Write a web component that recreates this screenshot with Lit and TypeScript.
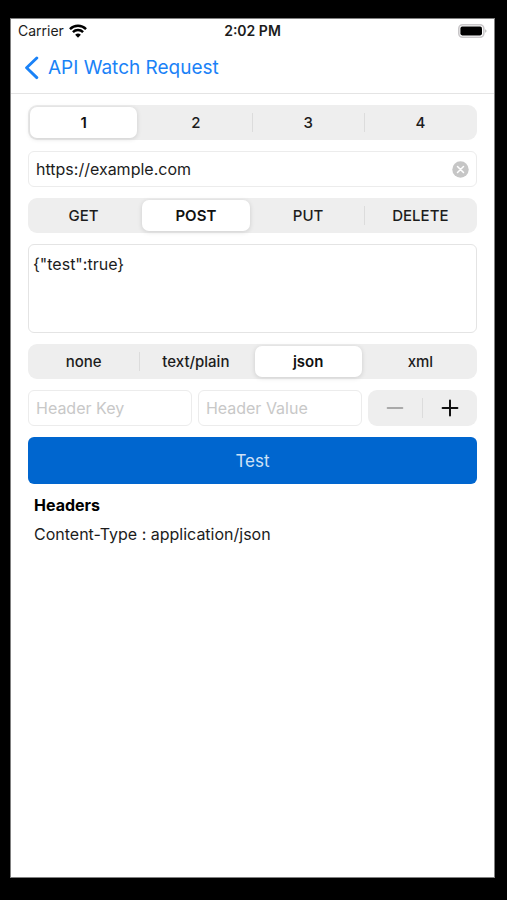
import { LitElement, html, css } from "lit";
import { customElement, property, state } from "lit/decorators.js";

/** A row of mutually exclusive choices. */
@customElement("segmented-control")
export class SegmentedControl extends LitElement {
  @property() name = "";
  @property() label = "";
  @property({ type: Array }) options: string[] = [];
  @property() value = "";

  static styles = css`
    :host {
      display: block;
    }
    .group {
      display: grid;
      grid-auto-flow: column;
      grid-auto-columns: minmax(0, 1fr);
      height: 35px;
      margin: 0;
      padding: 0;
      border: 0;
      border-radius: 9px;
      background: #eeeeee;
    }
    .segment {
      position: relative;
      display: flex;
      padding: 2px 3px 2px 2px;
      font-size: 15px;
      font-weight: 500;
      line-height: 20px;
      color: #1c1c1c;
      cursor: pointer;
    }
    .segment + .segment::before {
      content: "";
      position: absolute;
      left: -1px;
      top: 8px;
      bottom: 8px;
      width: 1px;
      background: #dcdcdc;
    }
    .segment.chosen::before,
    .segment.chosen + .segment::before {
      display: none;
    }
    .radio {
      position: absolute;
      inset: 0;
      margin: 0;
      opacity: 0;
      cursor: pointer;
    }
    .face {
      flex: 1;
      display: flex;
      align-items: center;
      justify-content: center;
      border-radius: 7px;
    }
    .chosen .face {
      background: #ffffff;
      color: #111111;
      font-weight: 600;
      box-shadow: 0 1px 5px rgba(0, 0, 0, 0.14);
    }
    .radio:focus-visible + .face {
      outline: 2px solid #007aff;
    }
  `;

  render() {
    return html`
      <fieldset class="group" aria-label=${this.label}>
        ${this.options.map(
          (option) => html`
            <label class="segment ${option === this.value ? "chosen" : ""}">
              <input
                class="radio"
                type="radio"
                name=${this.name}
                .value=${option}
                .checked=${option === this.value}
                @change=${() => (this.value = option)}
              />
              <span class="face">${option}</span>
            </label>
          `,
        )}
      </fieldset>
    `;
  }
}

@customElement("app-root")
export class AppRoot extends LitElement {
  @state() private url = "https://example.com";

  static styles = css`
    :host {
      display: flex;
      box-sizing: border-box;
      min-height: 100vh;
      padding: 18px 12px 22px 10px;
      background: #000000;
      font-family: Inter, "Liberation Sans", sans-serif;
      color: #1c1c1c;
    }
    * {
      box-sizing: border-box;
    }
    .screen {
      flex: 1;
      min-width: 0;
      border: 1px solid #808080;
      background: #ffffff;
    }
    .status {
      display: grid;
      grid-template-columns: 1fr auto 1fr;
      align-items: center;
      height: 24px;
      padding: 0 7px;
      font-size: 14px;
      line-height: 20px;
    }
    .carrier {
      display: flex;
      align-items: center;
      gap: 5px;
    }
    .time {
      font-weight: 600;
    }
    .battery {
      justify-self: end;
    }
    svg {
      display: block;
    }
    .nav {
      display: flex;
      align-items: center;
      height: 51px;
      padding: 0 13px;
      border-bottom: 1px solid #e4e4e4;
    }
    .back {
      display: flex;
      align-items: center;
      gap: 8px;
      color: #1a82f7;
      font-size: 19px;
      line-height: 24px;
      text-decoration: none;
    }
    .form {
      display: flex;
      flex-direction: column;
      gap: 11px;
      padding: 11px 17px 0;
    }
    input,
    textarea,
    button {
      font: inherit;
      color: inherit;
    }
    .field {
      display: flex;
      align-items: center;
      height: 36px;
      border: 1px solid #ececec;
      border-radius: 6px;
    }
    .input {
      flex: 1;
      min-width: 0;
      height: 100%;
      padding: 0 7px;
      border: 0;
      outline: 0;
      background: none;
      font-size: 16px;
    }
    .input::placeholder {
      color: #c8c8c8;
      opacity: 1;
    }
    .clear {
      padding: 0 7px;
      border: 0;
      background: none;
    }
    .body {
      display: block;
      width: 100%;
      height: 89px;
      padding: 9px 4px;
      border: 1px solid #e4e4e4;
      border-radius: 6px;
      outline: 0;
      resize: none;
      background: none;
      font-size: 16px;
      line-height: 20px;
    }
    .row {
      display: grid;
      grid-template-columns: minmax(0, 3fr) minmax(0, 3fr) minmax(0, 2fr);
      gap: 6px;
    }
    .stepper {
      display: flex;
      align-items: center;
      height: 36px;
      border-radius: 9px;
      background: #eeeeee;
    }
    .step {
      flex: 1;
      display: flex;
      align-items: center;
      justify-content: center;
      height: 100%;
      padding: 0;
      border: 0;
      background: none;
    }
    .rule {
      width: 1px;
      height: 20px;
      background: #dcdcdc;
    }
    .send {
      height: 47px;
      border: 0;
      border-radius: 6px;
      background: #0066cf;
      color: #cfe1f6;
      font-size: 17px;
    }
    .headers {
      padding: 0 6px;
      font-size: 16px;
      line-height: 20px;
    }
    .title {
      margin: 0 0 9px;
      font-size: 16px;
      font-weight: 700;
      color: #000000;
    }
    .entry {
      margin: 0;
    }
  `;

  render() {
    return html`
      <div class="screen">
        <div class="status">
          <span class="carrier">
            Carrier
            <svg width="18" height="14" viewBox="0 0 17 13" aria-hidden="true">
              <g fill="none" stroke="#000" stroke-width="2.3">
                <path d="M0.9 4.7a10.8 10.8 0 0 1 15.2 0" />
                <path d="M3.7 7.6a6.8 6.8 0 0 1 9.6 0" />
              </g>
              <path d="M8.5 12.9L5.8 10.1a3.9 3.9 0 0 1 5.4 0z" />
            </svg>
          </span>
          <span class="time">2:02 PM</span>
          <svg class="battery" width="29" height="14" viewBox="0 0 29 14" aria-label="Battery full">
            <rect x="0.8" y="0.8" width="25" height="12.4" rx="3.8" fill="#fff" stroke="#c9c7c9" stroke-width="1.6" />
            <rect x="2.4" y="2.6" width="21.6" height="8.8" rx="1.8" />
            <path d="M27.3 5.2a2 2 0 0 1 0 3.6z" fill="#aaa" />
          </svg>
        </div>

        <nav class="nav">
          <a class="back" href="#">
            <svg width="16" height="24" viewBox="0 0 16 24" aria-hidden="true">
              <path d="M12.8 2L2.6 11.8l10.2 9.8" fill="none" stroke="#1a82f7" stroke-width="2.9" stroke-linecap="round" stroke-linejoin="round" />
            </svg>
            API Watch Request
          </a>
        </nav>

        <main class="form">
          <segmented-control name="slot" label="Request slot" .options=${["1", "2", "3", "4"]} value="1"></segmented-control>

          <div class="field">
            <input
              class="input"
              type="text"
              aria-label="URL"
              .value=${this.url}
              @input=${(e: Event) => (this.url = (e.target as HTMLInputElement).value)}
            />
            <button class="clear" type="button" aria-label="Clear URL" @click=${() => (this.url = "")}>
              <svg width="17" height="17" viewBox="0 0 17 17" aria-hidden="true">
                <circle cx="8.5" cy="8.5" r="8.2" fill="#c6c6c6" />
                <path d="M5.5 5.5l6 6M11.5 5.5l-6 6" stroke="#fff" stroke-width="1.5" stroke-linecap="round" />
              </svg>
            </button>
          </div>

          <segmented-control name="method" label="Method" .options=${["GET", "POST", "PUT", "DELETE"]} value="POST"></segmented-control>

          <textarea class="body" aria-label="Request body" spellcheck="false" .value=${'{"test":true}'}></textarea>

          <segmented-control name="type" label="Body type" .options=${["none", "text/plain", "json", "xml"]} value="json"></segmented-control>

          <div class="row">
            <div class="field">
              <input class="input" type="text" aria-label="Header Key" placeholder="Header Key" />
            </div>
            <div class="field">
              <input class="input" type="text" aria-label="Header Value" placeholder="Header Value" />
            </div>
            <div class="stepper">
              <button class="step" type="button" aria-label="Remove header">
                <svg width="18" height="18" viewBox="0 0 18 18" aria-hidden="true">
                  <path d="M1.5 9h15" stroke="#929292" stroke-width="1.6" stroke-linecap="round" />
                </svg>
              </button>
              <span class="rule"></span>
              <button class="step" type="button" aria-label="Add header">
                <svg width="18" height="18" viewBox="0 0 18 18" aria-hidden="true">
                  <path d="M1.6 9h14.8M9 1.6v14.8" stroke="#111" stroke-width="2" stroke-linecap="round" />
                </svg>
              </button>
            </div>
          </div>

          <button class="send" type="button">Test</button>

          <section class="headers">
            <h2 class="title">Headers</h2>
            <p class="entry">Content-Type : application/json</p>
          </section>
        </main>
      </div>
    `;
  }
}
